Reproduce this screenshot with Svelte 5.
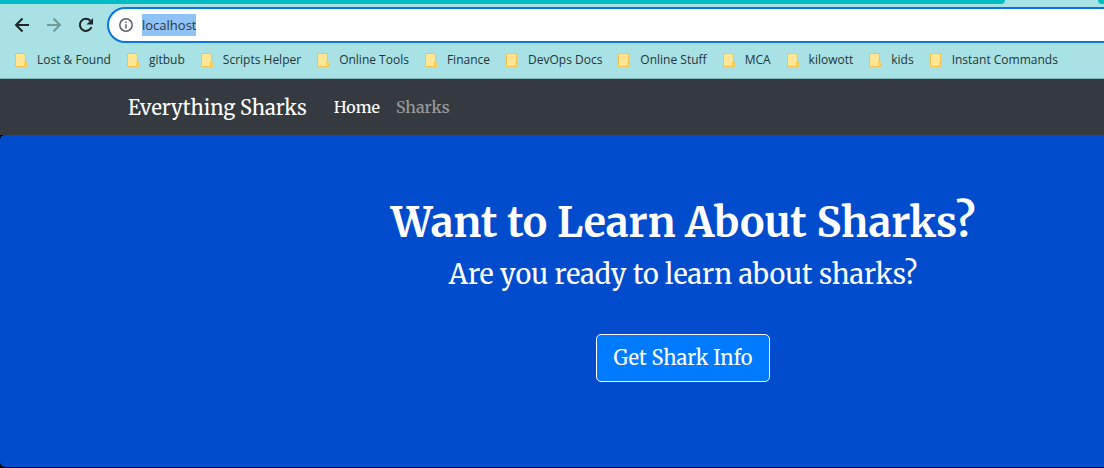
<script>
  const bookmarks = [
    'Lost & Found', 'gitbub', 'Scripts Helper', 'Online Tools', 'Finance', 'DevOps Docs',
    'Online Stuff', 'MCA', 'kilowott', 'kids', 'Instant Commands'
  ];
  let address = $state('localhost');
</script>

<div class="window">
  <div class="tabs"><span class="strip"></span><span class="strip next"></span></div>

  <div class="toolbar">
    <button class="tool" aria-label="Back">
      <svg viewBox="0 0 16 16"><path d="M15 8H2M8.500 1.500 2 8l6.500 6.500" /></svg>
    </button>
    <button class="tool faded" aria-label="Forward">
      <svg viewBox="0 0 16 16"><path d="M1 8h13M7.500 1.500 14 8l-6.500 6.500" /></svg>
    </button>
    <button class="tool" aria-label="Reload">
      <svg viewBox="0 0 16 16"><path d="M13.500 10A6 6 0 1 1 12.300 3.800" /><path class="solid" d="M15 1v6.500H8.500z" /></svg>
    </button>
    <div class="omnibox">
      <svg class="info" viewBox="0 0 14 14" aria-hidden="true">
        <circle cx="7" cy="7" r="6.200" /><path d="M7 6.200v4.200M7 3.400v1.500" />
      </svg>
      <span class="field"><input aria-label="Address" bind:value={address} /></span>
    </div>
  </div>

  <nav class="bookmarks" aria-label="Bookmarks">
    {#each bookmarks as name}
      <a href="#bookmark">
        <svg viewBox="0 0 13 14" aria-hidden="true">
          <path d="M.5.500h10v9.500l-1 3.500h-9z" /><path d="M9.500 9.500h2v4h-2z" />
        </svg>{name}
      </a>
    {/each}
  </nav>

  <nav class="navbar" aria-label="Main">
    <a class="brand" href="#top">Everything Sharks</a>
    <a class="link" href="#home">Home</a>
    <a class="link muted" href="#sharks">Sharks</a>
  </nav>

  <main class="hero">
    <h1>Want to Learn About Sharks?</h1>
    <p>Are you ready to learn about sharks?</p>
    <a class="cta" href="#info">Get Shark Info</a>
  </main>
</div>

<style>
  :global(body) { margin: 0; background: #000; }
  .window { overflow: hidden; font-family: "Merriweather", "DejaVu Serif Condensed", "DejaVu Serif", serif; }
  a { text-decoration: none; color: inherit; white-space: nowrap; }
  svg { display: block; flex: none; }

  .tabs { display: flex; justify-content: space-between; height: 4px; background: #a8e2e4; }
  .strip { width: 91%; background: #00bcc5; border-bottom-right-radius: 6px; }
  .strip.next { width: 6px; border-radius: 0 0 0 6px; }

  .toolbar { display: flex; align-items: center; height: 42px; padding-left: 14px; background: #a8e2e4; }
  .tool { width: 16px; height: 16px; margin-right: 16px; padding: 0; border: 0; background: none; color: #202528; }
  .tool svg { width: 16px; height: 16px; fill: none; stroke: currentColor; stroke-width: 2; }
  .tool .solid { fill: currentColor; stroke: none; }
  .faded { color: #72989b; }
  .omnibox {
    display: flex; flex: 1; align-items: center; box-sizing: border-box; height: 36px;
    margin-left: -3px; padding-left: 10px; border: 2px solid #0b73e6; border-right: 0;
    border-radius: 18px 0 0 18px; background: #fff;
  }
  .info { width: 14px; height: 14px; fill: none; stroke: #5b5f64; stroke-width: 1.5; }
  .field { flex: 1; margin-left: 9px; }
  input {
    display: block; field-sizing: content; height: 22px; padding: 0; border: 0; outline: 0;
    background: #90c3f5; color: #2b3844; font: 13px/22px "Segoe UI", "Open Sans", sans-serif;
  }

  .bookmarks {
    display: flex; gap: 16px; align-items: center; box-sizing: border-box; height: 33px; padding: 0 0 4px 15px;
    border-bottom: 1px solid #83b5b7; background: #a8e2e4; color: #24343a;
    font: 12px/16px "Segoe UI", "Open Sans", sans-serif;
  }
  .bookmarks a { display: flex; align-items: center; gap: 9px; }
  .bookmarks svg { width: 13px; height: 14px; fill: #ffe694; stroke: #f5c34b; }

  .navbar { display: flex; align-items: center; height: 56px; padding-left: 128px; background: #343a40; color: #fff; }
  .brand { margin-right: 27px; font-size: 20px; }
  .link { margin-right: 16px; font-size: 16px; font-weight: 500; }
  .muted { color: #999c9f; }

  .hero {
    display: flex; flex-direction: column; align-items: center; box-sizing: border-box;
    min-height: 332px; padding: 64px 0 64px 262px; border-radius: 5px 0 0 5px; background: #004ccc; color: #fff;
  }
  h1 { margin: 0 0 8px; font-size: 41px; line-height: 48px; white-space: nowrap; }
  p { margin: 0 0 40px; font-size: 27px; line-height: 39px; white-space: nowrap; }
  .cta {
    padding: 8px 17px; border: 1px solid #fff; border-radius: 5px; background: #007bff;
    font-size: 20px; line-height: 30px;
  }
</style>
